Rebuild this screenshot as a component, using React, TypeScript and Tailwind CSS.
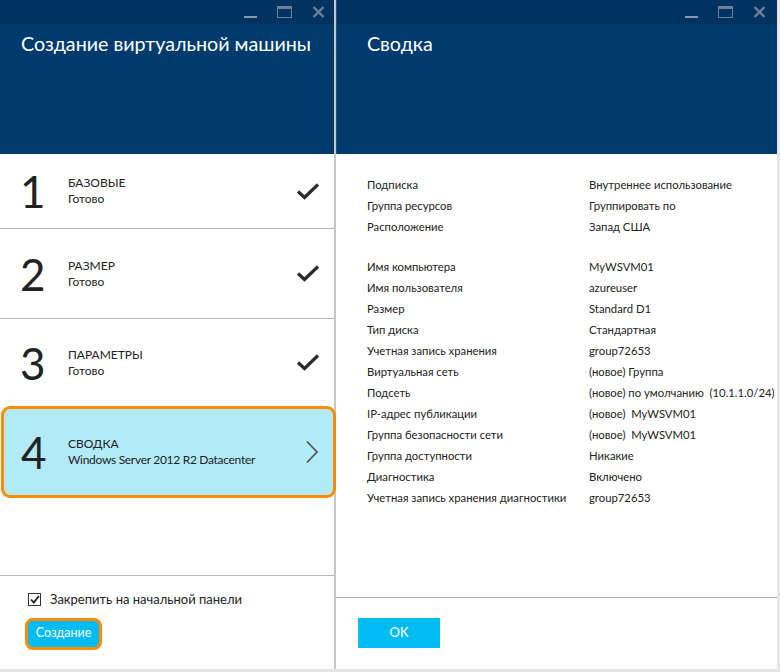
import React from "react";

const FONT = "font-['Lato','Noto_Sans',sans-serif]";

function WindowControls() {
  return (
    <div className="flex items-start gap-[20px] pt-[6px]">
      <div className="w-[13px] h-[12px] flex items-end">
        <div className="w-[13px] h-[2px] bg-[#8b97a6]" />
      </div>
      <div className="w-[15px] h-[12px] border-[1.5px] border-t-[3px] border-[#6f8196]" />
      <svg width="13" height="12" viewBox="0 0 13 12">
        <path d="M1.5 1 L11.5 11 M11.5 1 L1.5 11" stroke="#6f8196" strokeWidth="2.4" />
      </svg>
    </div>
  );
}

function Check() {
  return (
    <svg width="24" height="17" viewBox="0 0 24 17">
      <path d="M2 8.5 L8.5 14.5 L22 1.5" fill="none" stroke="#2b2b2b" strokeWidth="3.2" />
    </svg>
  );
}

const steps = [
  { n: "1", title: "БАЗОВЫЕ", sub: "Готово", h: "h-[75px] border-b border-[#b9b9b9]" },
  { n: "2", title: "РАЗМЕР", sub: "Готово", h: "h-[90px] border-b border-[#b9b9b9]" },
  { n: "3", title: "ПАРАМЕТРЫ", sub: "Готово", h: "h-[87px]" },
];

const summaryA = [
  ["Подписка", "Внутреннее использование"],
  ["Группа ресурсов", "Группировать по"],
  ["Расположение", "Запад США"],
];

const summaryB = [
  ["Имя компьютера", "MyWSVM01"],
  ["Имя пользователя", "azureuser"],
  ["Размер", "Standard D1"],
  ["Тип диска", "Стандартная"],
  ["Учетная запись хранения", "group72653"],
  ["Виртуальная сеть", "(новое) Группа"],
  ["Подсеть", "(новое) по умолчанию  (10.1.1.0/24)"],
  ["IP-адрес публикации", "(новое)  MyWSVM01"],
  ["Группа безопасности сети", "(новое)  MyWSVM01"],
  ["Группа доступности", "Никакие"],
  ["Диагностика", "Включено"],
  ["Учетная запись хранения диагностики", "group72653"],
];

function SummaryRow({ label, value }: { label: string; value: string }) {
  return (
    <div className="flex h-[21px] items-center text-[11.3px] text-[#222] whitespace-pre">
      <div className="w-[222px] shrink-0">{label}</div>
      <div className="shrink-0">{value}</div>
    </div>
  );
}

export default function App() {
  return (
    <div className={`w-[780px] h-[672px] bg-[#e6e6e6] flex overflow-hidden ${FONT}`}>
      {/* left blade */}
      <div className="w-[336px] h-[669px] bg-white border-r-[2px] border-[#c6c6c6] flex flex-col">
        <div className="h-[154px] bg-[#003b6d] flex flex-col">
          <div className="h-[24px] bg-[#003262] flex justify-end pr-[9px]">
            <WindowControls />
          </div>
          <div className="pl-[21px] pt-[6px] text-[19.7px] text-white leading-[28px] whitespace-nowrap">
            Создание виртуальной машины
          </div>
        </div>

        {steps.map((s) => (
          <div key={s.n} className={`flex items-center pl-[20px] pr-[14px] ${s.h}`}>
            <div className="w-[48px] text-[44px] leading-none text-[#222]">{s.n}</div>
            <div className="flex-1 text-[12px] text-[#222] leading-[16px]">
              <div>{s.title}</div>
              <div>{s.sub}</div>
            </div>
            <Check />
          </div>
        ))}

        <div className="h-[92px] -mr-[2px] ml-[1px] bg-[#b3eaf8] border-[3px] border-[#ff8c00] rounded-[9px] flex items-center pl-[17px] pr-[14px]">
          <div className="w-[47px] text-[44px] leading-none text-[#222]">4</div>
          <div className="flex-1 text-[12px] text-[#222] leading-[16px]">
            <div>СВОДКА</div>
            <div className="tracking-[-0.3px]">Windows Server 2012 R2 Datacenter</div>
          </div>
          <svg width="14" height="24" viewBox="0 0 14 24">
            <path d="M2 1.5 L12 12 L2 22.5" fill="none" stroke="#555" strokeWidth="1.8" />
          </svg>
        </div>

        <div className="flex-1" />

        <div className="h-[94px] border-t border-[#b9b9b9] pl-[28px] pt-[14px]">
          <div className="flex items-center gap-[9px] text-[13px] text-[#222]">
            <div className="w-[13px] h-[13px] border border-[#333] flex items-center justify-center">
              <svg width="10" height="9" viewBox="0 0 10 9">
                <path d="M1 4.5 L3.8 7.5 L9 1" fill="none" stroke="#222" strokeWidth="1.8" />
              </svg>
            </div>
            <span>Закрепить на начальной панели</span>
          </div>
          <div className="mt-[8px] -ml-[3px] w-[77px] h-[32px] bg-[#00bcf2] border-[3px] border-[#ff8c00] rounded-[8px] flex items-center justify-center text-[12.5px] text-white">
            Создание
          </div>
        </div>
      </div>

      {/* right blade */}
      <div className="w-[441px] h-[669px] bg-white flex flex-col">
        <div className="h-[154px] bg-[#003b6d] border-l border-[#1a5590] flex flex-col">
          <div className="h-[24px] bg-[#003262] flex justify-end pr-[11px]">
            <WindowControls />
          </div>
          <div className="pl-[30px] pt-[6px] text-[19.7px] text-white leading-[28px]">Сводка</div>
        </div>

        <div className="pl-[31px] pt-[21px]">
          {summaryA.map(([l, v]) => (
            <SummaryRow key={l} label={l} value={v} />
          ))}
          <div className="h-[19px]" />
          {summaryB.map(([l, v]) => (
            <SummaryRow key={l} label={l} value={v} />
          ))}
        </div>

        <div className="flex-1" />

        <div className="h-[72px] border-t border-[#b0b0b0] pl-[22px] pt-[20px]">
          <div className="w-[82px] h-[30px] bg-[#00bcf2] flex items-center justify-center text-[13px] text-white">
            OK
          </div>
        </div>
      </div>
    </div>
  );
}
